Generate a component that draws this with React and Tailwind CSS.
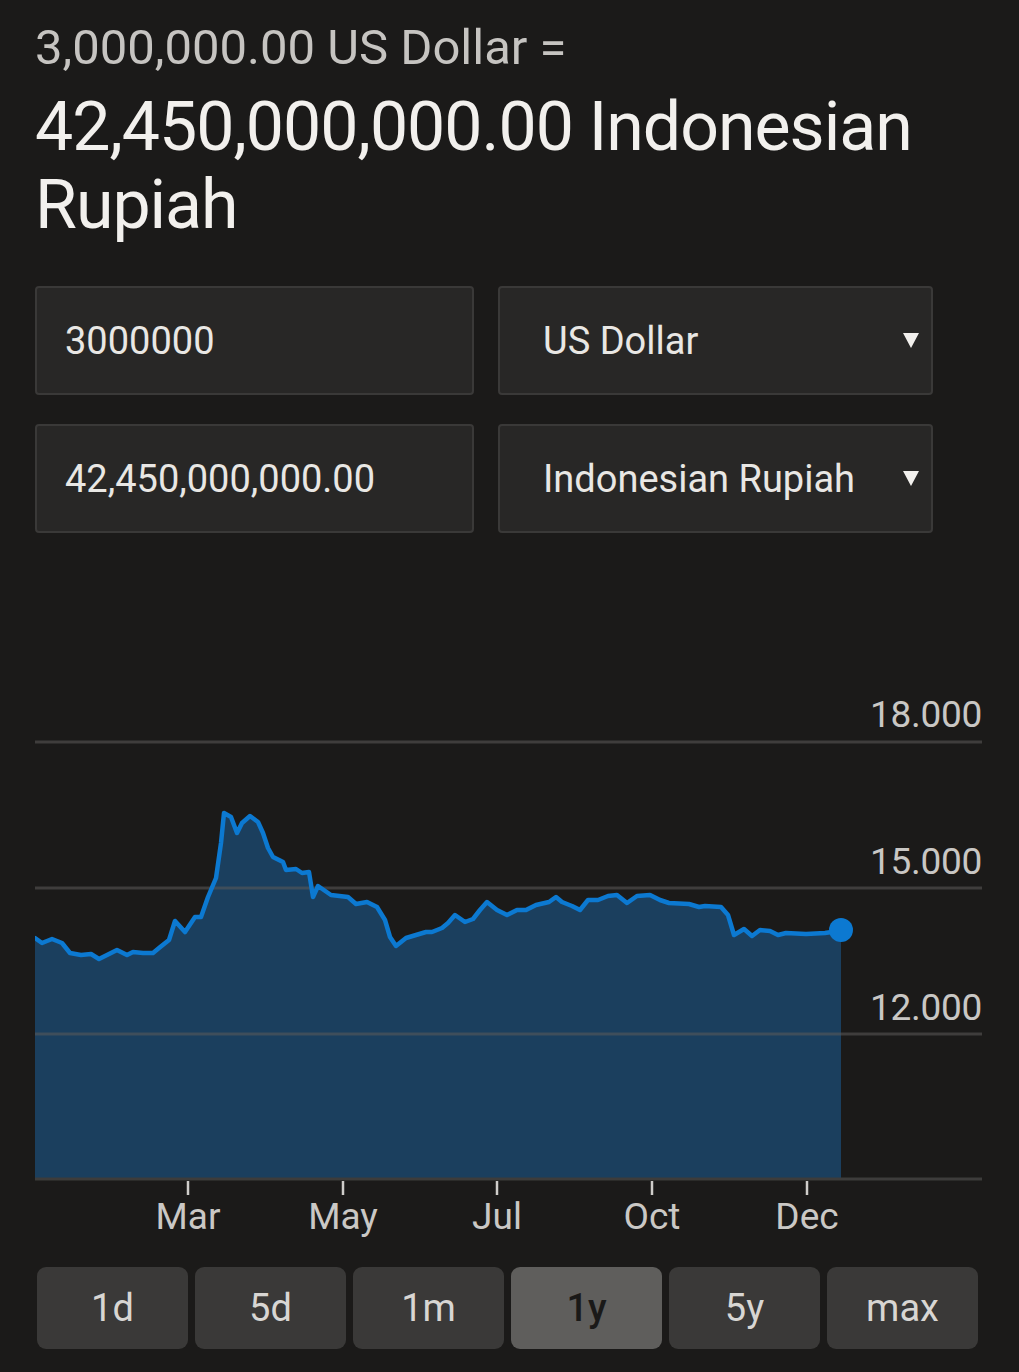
import React from "react";

const PTS = [
  [35, 938], [42, 943], [52, 939], [62, 943], [70, 953], [81, 955], [91, 954], [99, 959],
  [107, 955], [117, 950], [127, 955], [133, 952], [143, 953], [153, 953], [159, 948],
  [169, 940], [175, 921], [185, 932], [195, 917], [201, 917], [208, 897], [216, 878],
  [221, 843], [224, 813], [231, 817], [237, 833], [242, 823], [250, 816], [258, 822],
  [263, 833], [268, 848], [273, 857], [283, 862], [286, 870], [296, 869], [302, 873],
  [309, 872], [313, 897], [318, 886], [331, 895], [348, 897], [356, 904], [367, 902],
  [377, 907], [385, 920], [390, 937], [396, 946], [406, 938], [416, 935], [426, 932],
  [432, 932], [442, 928], [448, 923], [455, 915], [465, 922], [473, 919], [480, 910],
  [487, 902], [497, 910], [507, 915], [517, 910], [526, 910], [536, 905], [549, 902],
  [556, 897], [562, 902], [572, 906], [580, 910], [588, 900], [598, 900], [608, 896],
  [617, 895], [627, 903], [637, 896], [650, 895], [660, 900], [669, 903], [689, 904],
  [699, 907], [705, 906], [721, 907], [728, 915], [734, 935], [744, 929], [752, 936],
  [760, 930], [770, 931], [778, 935], [786, 933], [806, 934], [825, 933], [838, 931],
  [841, 930],
];

const OX = 35;
const OY = 680;

function Chart() {
  const pts = PTS.map(([x, y]) => [x - OX, y - OY]);
  const line = pts.map((p, i) => `${i ? "L" : "M"}${p[0]} ${p[1]}`).join(" ");
  const last = pts[pts.length - 1];
  const area = `${line} L${last[0]} ${1179 - OY} L0 ${1179 - OY} Z`;
  const grids = [742, 888, 1034].map((y) => y - OY);
  const ticks = [188, 343, 497, 652, 807].map((x) => x - OX);
  const yLabels = [
    ["18.000", 13],
    ["15.000", 160],
    ["12.000", 306],
  ];
  const xLabels = ["Mar", "May", "Jul", "Oct", "Dec"];
  return (
    <div className="relative mt-[147px] h-[560px] w-[947px]">
      <svg width="947" height="560" viewBox="0 0 947 560" className="block">
        <path d={area} fill="#1b3f5e" />
        {grids.map((y) => (
          <line key={y} x1="0" x2="947" y1={y} y2={y} stroke="#5c5b5a" strokeOpacity="0.55" strokeWidth="3" />
        ))}
        <line x1="0" x2="947" y1={1179 - OY} y2={1179 - OY} stroke="#3d3c3b" strokeWidth="3" />
        {ticks.map((x) => (
          <line key={x} x1={x} x2={x} y1={1181 - OY} y2={1195 - OY} stroke="#cfcdca" strokeWidth="2.5" />
        ))}
        <path d={line} fill="none" stroke="#0c79d1" strokeWidth="4.5" strokeLinejoin="round" strokeLinecap="round" />
        <circle cx={last[0]} cy={last[1]} r="12" fill="#0c79d1" />
      </svg>
      {yLabels.map(([t, top]) => (
        <div
          key={t}
          className="absolute right-0 text-[37px] leading-[44px] tracking-[-0.3px] text-[#c9c7c4]"
          style={{ top }}
        >
          {t}
        </div>
      ))}
      {xLabels.map((t, i) => (
        <div
          key={t}
          className="absolute top-[515px] w-[120px] -translate-x-1/2 text-center text-[37px] leading-[44px] text-[#cac8c5]"
          style={{ left: ticks[i] }}
        >
          {t}
        </div>
      ))}
    </div>
  );
}

function Arrow() {
  return (
    <svg width="16" height="15" viewBox="0 0 16 15" className="block">
      <path d="M0 0 H16 L8 15 Z" fill="#f2f0ed" />
    </svg>
  );
}

function Box({ children, select }) {
  return (
    <div
      className={
        select
          ? "flex h-[109px] items-center justify-between rounded-[4px] border-2 border-[#3a3938] bg-[#282726] pl-[43px] pr-[12px]"
          : "flex h-[109px] items-center rounded-[4px] border-2 border-[#3a3938] bg-[#282726] pl-[28px]"
      }
    >
      <span className="text-[38px] leading-[44px] text-[#e9e7e4]">{children}</span>
      {select && <Arrow />}
    </div>
  );
}

export default function App() {
  const ranges = ["1d", "5d", "1m", "1y", "5y", "max"];
  return (
    <div className="min-h-[1372px] w-[1019px] bg-[#1b1a19] px-[35px] pt-[19px] font-['Roboto',sans-serif]">
      <div className="text-[49px] leading-[58px] text-[#c6c4c1]">3,000,000.00 US Dollar =</div>
      <div className="mt-[11px] text-[68px] leading-[78px] tracking-[-1px] text-[#f2f0ed]">
        42,450,000,000.00 Indonesian
        <br />
        Rupiah
      </div>
      <div className="mt-[42px] grid grid-cols-[439px_435px] gap-x-[24px] gap-y-[29px]">
        <Box>3000000</Box>
        <Box select>US Dollar</Box>
        <Box>42,450,000,000.00</Box>
        <Box select>Indonesian Rupiah</Box>
      </div>
      <Chart />
      <div className="ml-[2px] mt-[27px] grid grid-cols-[repeat(6,151px)] gap-x-[7px]">
        {ranges.map((r) => (
          <div
            key={r}
            className={
              r === "1y"
                ? "flex h-[82px] items-center justify-center rounded-[9px] bg-[#5f5e5c] text-[38px] font-medium text-[#1a1918]"
                : "flex h-[82px] items-center justify-center rounded-[9px] bg-[#3a3938] text-[38px] text-[#d8d6d3]"
            }
          >
            {r}
          </div>
        ))}
      </div>
    </div>
  );
}
